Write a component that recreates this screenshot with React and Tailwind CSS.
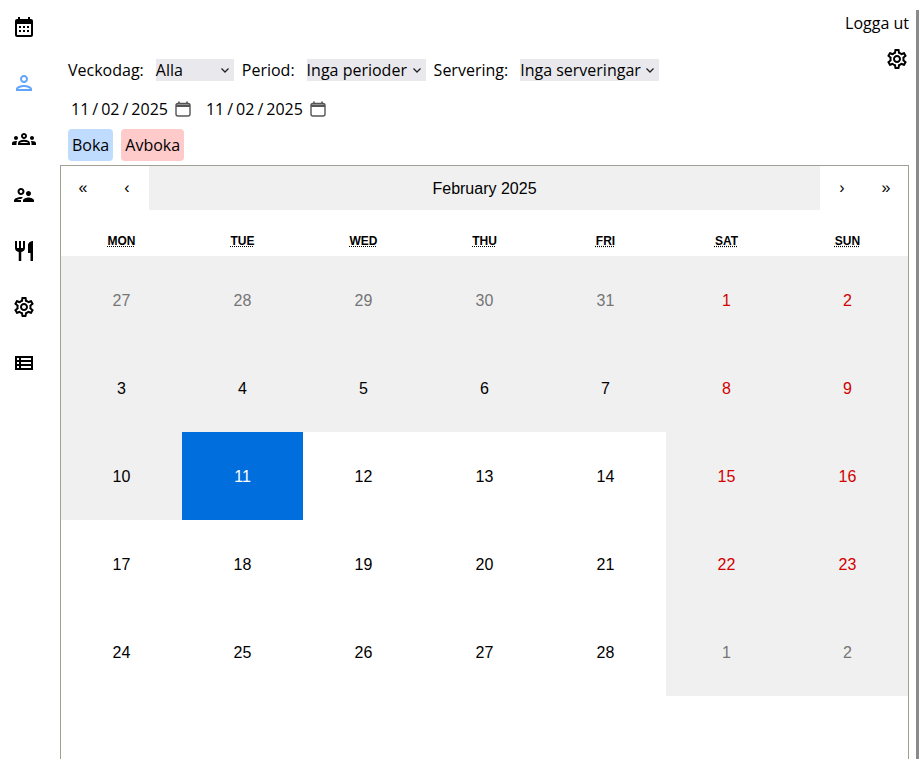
import React from "react";

const days = [
  [27, 28, 29, 30, 31, 1, 2],
  [3, 4, 5, 6, 7, 8, 9],
  [10, 11, 12, 13, 14, 15, 16],
  [17, 18, 19, 20, 21, 22, 23],
  [24, 25, 26, 27, 28, 1, 2],
];
const weekdays = ["Mon", "Tue", "Wed", "Thu", "Fri", "Sat", "Sun"];

const GearIcon = () => (
  <svg width="24" height="24" viewBox="0 0 24 24" fill="currentColor">
    <path d="M19.43 12.98c.04-.32.07-.64.07-.98 0-.34-.03-.66-.07-.98l2.11-1.65c.19-.15.24-.42.12-.64l-2-3.46c-.09-.16-.26-.25-.44-.25-.06 0-.12.01-.17.03l-2.49 1c-.52-.4-1.08-.73-1.69-.98l-.38-2.65C14.46 2.18 14.25 2 14 2h-4c-.25 0-.46.18-.49.42l-.38 2.65c-.61.25-1.17.59-1.69.98l-2.49-1c-.06-.02-.12-.03-.18-.03-.17 0-.34.09-.43.25l-2 3.46c-.13.22-.07.49.12.64l2.11 1.65c-.04.32-.07.65-.07.98 0 .33.03.66.07.98l-2.11 1.65c-.19.15-.24.42-.12.64l2 3.46c.09.16.26.25.44.25.06 0 .12-.01.17-.03l2.49-1c.52.4 1.08.73 1.69.98l.38 2.65c.03.24.24.42.49.42h4c.25 0 .46-.18.49-.42l.38-2.65c.61-.25 1.17-.59 1.69-.98l2.49 1c.06.02.12.03.18.03.17 0 .34-.09.43-.25l2-3.46c.12-.22.07-.49-.12-.64l-2.11-1.65zm-1.98-1.71c.04.31.05.52.05.73 0 .21-.02.43-.05.73l-.14 1.13.89.7 1.08.84-.7 1.21-1.27-.51-1.04-.42-.9.68c-.43.32-.84.56-1.25.73l-1.06.43-.16 1.13-.2 1.35h-1.4l-.19-1.35-.16-1.13-1.06-.43c-.43-.18-.83-.41-1.23-.71l-.91-.7-1.06.43-1.27.51-.7-1.21 1.08-.84.89-.7-.14-1.13c-.03-.31-.05-.54-.05-.74s.02-.43.05-.73l.14-1.13-.89-.7-1.08-.84.7-1.21 1.27.51 1.04.42.9-.68c.43-.32.84-.56 1.25-.73l1.06-.43.16-1.13.2-1.35h1.39l.19 1.35.16 1.13 1.06.43c.43.18.83.41 1.23.71l.91.7 1.06-.43 1.27-.51.7 1.21-1.07.85-.89.7.14 1.13zM12 8c-2.21 0-4 1.79-4 4s1.79 4 4 4 4-1.79 4-4-1.79-4-4-4zm0 6c-1.1 0-2-.9-2-2s.9-2 2-2 2 .9 2 2-.9 2-2 2z" />
  </svg>
);

const PersonIcon = () => (
  <svg width="24" height="24" viewBox="0 0 24 24" fill="currentColor">
    <path d="M12 6c1.1 0 2 .9 2 2s-.9 2-2 2-2-.9-2-2 .9-2 2-2m0 10c2.7 0 5.8 1.29 6 2H6c.23-.72 3.31-2 6-2m0-12C9.79 4 8 5.79 8 8s1.79 4 4 4 4-1.79 4-4-1.79-4-4-4zm0 10c-2.67 0-8 1.34-8 4v2h16v-2c0-2.66-5.33-4-8-4z" />
  </svg>
);

const GroupsIcon = () => (
  <svg width="24" height="24" viewBox="0 0 24 24" fill="currentColor">
    <path d="M4 13c1.1 0 2-.9 2-2s-.9-2-2-2-2 .9-2 2 .9 2 2 2zm1.13 1.1c-.37-.06-.74-.1-1.13-.1-.99 0-1.93.21-2.78.58C.48 14.9 0 15.62 0 16.43V18h4.5v-1.61c0-.83.23-1.61.63-2.29zM20 13c1.1 0 2-.9 2-2s-.9-2-2-2-2 .9-2 2 .9 2 2 2zm4 3.43c0-.81-.48-1.53-1.22-1.85-.85-.37-1.79-.58-2.78-.58-.39 0-.76.04-1.13.1.4.68.63 1.46.63 2.29V18H24v-1.57zM16.24 13.65c-1.17-.52-2.61-.9-4.24-.9-1.63 0-3.07.39-4.24.9C6.68 14.13 6 15.21 6 16.39V18h12v-1.61c0-1.18-.68-2.26-1.76-2.74zM8.07 16c.09-.23.13-.39.91-.69.97-.38 1.99-.56 3.02-.56s2.05.18 3.02.56c.77.3.81.46.91.69H8.07zM12 8c.55 0 1 .45 1 1s-.45 1-1 1-1-.45-1-1 .45-1 1-1m0-2c-1.66 0-3 1.34-3 3s1.34 3 3 3 3-1.34 3-3-1.34-3-3-3z" />
  </svg>
);

const SupervisorIcon = () => (
  <svg width="24" height="24" viewBox="0 0 24 24" fill="currentColor">
    <path d="M9 12c1.93 0 3.5-1.57 3.5-3.5S10.93 5 9 5 5.5 6.57 5.5 8.5 7.07 12 9 12zm0-5c.83 0 1.5.67 1.5 1.5S9.83 10 9 10s-1.5-.67-1.5-1.5S8.17 7 9 7zm.05 10H4.77c.99-.5 2.7-1 4.23-1 .11 0 .23.01.34.01.34-.73.93-1.33 1.64-1.81-.73-.13-1.42-.2-1.98-.2-2.34 0-7 1.17-7 3.5V19h7v-1.5c0-.17.02-.34.05-.5zm7.45-2.5c-1.84 0-5.5 1.01-5.5 3V19h11v-1.5c0-1.99-3.66-3-5.5-3zm1.21-1.82c.76-.43 1.29-1.24 1.29-2.18C19 9.12 17.88 8 16.5 8S14 9.12 14 10.5c0 .94.53 1.75 1.29 2.18.36.2.77.32 1.21.32s.85-.12 1.21-.32z" />
  </svg>
);

const CalendarIcon = () => (
  <svg width="24" height="24" viewBox="0 0 24 24" fill="currentColor">
    <path d="M19 4h-1V2h-2v2H8V2H6v2H5c-1.1 0-2 .9-2 2v14c0 1.1.9 2 2 2h14c1.1 0 2-.9 2-2V6c0-1.1-.9-2-2-2zm0 16H5V9h14v11zM7 11h2v2H7zm4 0h2v2h-2zm4 0h2v2h-2zm-8 4h2v2H7zm4 0h2v2h-2zm4 0h2v2h-2z" />
  </svg>
);

const RestaurantIcon = () => (
  <svg width="24" height="24" viewBox="0 0 24 24" fill="currentColor">
    <path d="M11 9H9V2H7v7H5V2H3v7c0 2.12 1.66 3.84 3.75 3.97V22h2.5v-9.03C11.34 12.84 13 11.12 13 9V2h-2v7zm5-3v8h2.5v8H21V2c-2.76 0-5 2.24-5 4z" />
  </svg>
);

const ListIcon = () => (
  <svg width="24" height="24" viewBox="0 0 24 24" fill="currentColor">
    <path d="M3 5v14h18V5H3zm4 12H5v-2h2v2zm0-4H5v-2h2v2zm0-4H5V7h2v2zm12 8H9v-2h10v2zm0-4H9v-2h10v2zm0-4H9V7h10v2z" />
  </svg>
);

const sideIcons = [
  { icon: <CalendarIcon />, color: "text-black" },
  { icon: <PersonIcon />, color: "text-[#62a4fb]" },
  { icon: <GroupsIcon />, color: "text-black" },
  { icon: <SupervisorIcon />, color: "text-black" },
  { icon: <RestaurantIcon />, color: "text-black" },
  { icon: <GearIcon />, color: "text-black" },
  { icon: <ListIcon />, color: "text-black" },
];

const FilterSelect = ({ value, className }) => (
  <div
    className={`h-[22px] bg-[#e9e9ed] flex items-center justify-between pr-[4px] ${className}`}
  >
    <span>{value}</span>
    <svg width="10" height="10" viewBox="0 0 10 10" fill="none" stroke="#222" strokeWidth="1.3">
      <path d="M1.5 3.5 5 7l3.5-3.5" />
    </svg>
  </div>
);

const DateField = ({ className }) => (
  <div className={`flex items-center ${className}`}>
    <div className="flex gap-[3px]">
      <span>11</span>
      <span>/</span>
      <span>02</span>
      <span>/</span>
      <span>2025</span>
    </div>
    <svg className="ml-[6px]" width="18" height="18" viewBox="0 0 18 18" fill="none">
      <rect x="2" y="3.5" width="14" height="12.5" rx="2" stroke="#555" strokeWidth="1.4" />
      <path d="M2 4.5h14V7H2z" fill="#555" />
      <path d="M5 1.5v2M13 1.5v2" stroke="#555" strokeWidth="1.6" />
    </svg>
  </div>
);

const App = () => {
  return (
    <div className="relative w-[919px] h-[759px] overflow-hidden flex bg-white text-black font-['Open_Sans',sans-serif] text-base">
      {/* Sidebar */}
      <div className="w-[60px] shrink-0 flex flex-col items-center pt-[15px] gap-8 pr-[12px]">
        {sideIcons.map((s, i) => (
          <div key={i} className={`h-6 ${s.color}`}>
            {s.icon}
          </div>
        ))}
      </div>

      <div className="flex-1 min-w-0 flex flex-col">
        {/* Top */}
        <div className="flex">
          <div className="flex-1 min-w-0">
            <div className="flex items-center mt-[59px] ml-2 h-[22px]">
              <span>Veckodag:</span>
              <FilterSelect value="Alla" className="ml-3 w-[78px]" />
              <span className="ml-2">Period:</span>
              <FilterSelect value="Inga perioder" className="ml-3 w-[119px]" />
              <span className="ml-2">Servering:</span>
              <FilterSelect value="Inga serveringar" className="ml-3 w-[139px]" />
            </div>
            <div className="flex items-center mt-4 ml-[11px] h-6">
              <DateField />
              <DateField className="ml-[14px]" />
            </div>
            <div className="flex gap-2 mt-2 ml-2">
              <button className="h-8 px-1 rounded bg-[#bfdbfe]">Boka</button>
              <button className="h-8 px-1 rounded bg-[#fecaca]">Avboka</button>
            </div>
          </div>
          <div className="flex flex-col items-end pr-[10px] pt-[11px]">
            <span className="leading-6">Logga ut</span>
            <div className="mt-3">
              <GearIcon />
            </div>
          </div>
        </div>

        {/* Calendar */}
        <div className="mt-[4px] w-[849px] h-[600px] border border-[#a0a096] font-['Liberation_Sans',sans-serif] shrink-0">
          <div className="flex h-11">
            <div className="w-11 flex items-center justify-center">«</div>
            <div className="w-11 flex items-center justify-center">‹</div>
            <div className="flex-1 bg-[#f0f0f0] flex items-center justify-center pt-[2px]">February 2025</div>
            <div className="w-11 flex items-center justify-center">›</div>
            <div className="w-11 flex items-center justify-center">»</div>
          </div>
          <div className="grid grid-cols-7 h-[46px] items-center text-xs font-bold text-center">
            {weekdays.map((d) => (
              <div key={d} className="uppercase pt-[16px]">
                <abbr className="underline decoration-dotted">{d}</abbr>
              </div>
            ))}
          </div>
          <div className="grid grid-cols-7">
            {days.map((row, r) =>
              row.map((d, c) => {
                const isOther = (r === 0 && c < 5) || (r === 4 && c > 4);
                const isWeekend = c > 4;
                const isPast = r < 2 || (r === 2 && c === 0);
                const isToday = r === 2 && c === 1;
                let cls = "bg-white text-black";
                if (isPast || isWeekend) cls = "bg-[#f0f0f0] text-black";
                if (isWeekend) cls = "bg-[#f0f0f0] text-[#d10000]";
                if (isOther) cls = "bg-[#f0f0f0] text-[#757575]";
                if (isToday) cls = "bg-[#006edc] text-white";
                return (
                  <div key={`${r}-${c}`} className={`h-[88px] pt-[2px] flex items-center justify-center ${cls}`}>
                    {d}
                  </div>
                );
              })
            )}
          </div>
        </div>
      </div>

      {/* Scrollbar thumb */}
      <div className="absolute right-0 top-[10px] bottom-0 w-[3px] bg-[#8a8a8a]" />
    </div>
  );
};

export default App;
